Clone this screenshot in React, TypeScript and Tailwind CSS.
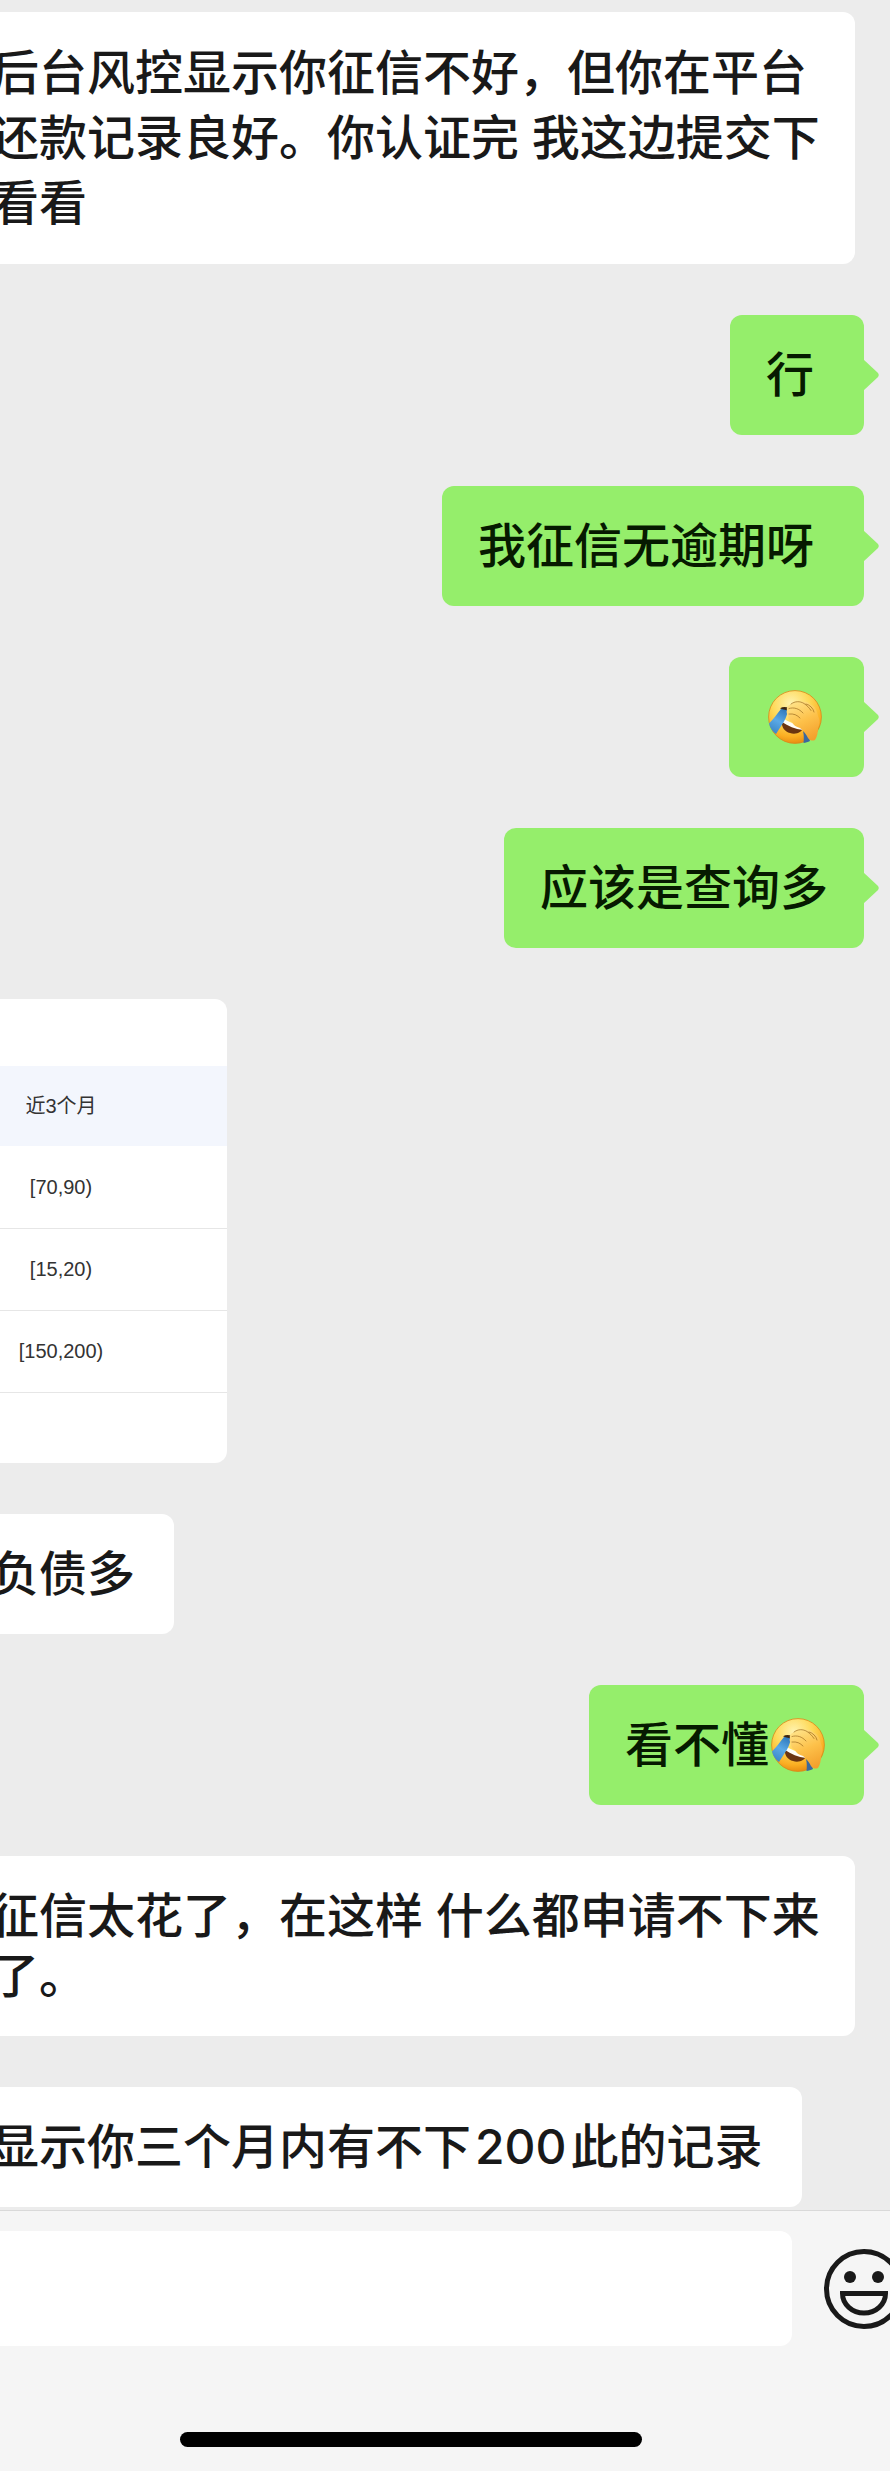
import type { ReactNode } from "react";
import clsx from "clsx";

const FONT =
  "font-[Inter,'Noto_Sans_CJK_SC',sans-serif] text-5xl font-medium";

type Message = {
  from: "me" | "them";
  lines?: string[];
  content?: ReactNode;
  className?: string;
};

function FacepalmEmoji() {
  return (
    <svg
      viewBox="0 0 54 54"
      role="img"
      aria-label="捂脸"
      className="size-[54px] shrink-0"
    >
      <defs>
        <radialGradient id="face" cx="0.42" cy="0.25" r="0.78">
          <stop offset="0" stopColor="#fff3b0" />
          <stop offset="0.45" stopColor="#fed958" />
          <stop offset="0.8" stopColor="#fbae22" />
          <stop offset="1" stopColor="#e5860f" />
        </radialGradient>
        <linearGradient id="hand" x1="0.3" y1="0" x2="0.7" y2="1">
          <stop offset="0" stopColor="#ffe287" />
          <stop offset="0.5" stopColor="#fdc14a" />
          <stop offset="1" stopColor="#f3a02c" />
        </linearGradient>
        <linearGradient id="tear" x1="0.7" y1="0" x2="0.3" y2="1">
          <stop offset="0" stopColor="#2f78bb" />
          <stop offset="0.5" stopColor="#5aa9e6" />
          <stop offset="1" stopColor="#3b86c6" />
        </linearGradient>
      </defs>
      <circle cx="27" cy="27" r="26.4" fill="url(#face)" stroke="#d8881c" strokeWidth="0.8" />
      {/* mouth */}
      <path d="M14 31c6 3 14 6 21 7-1 4-7 7-13 5-5-1-9-6-8-12z" fill="#6b3410" />
      <path d="M15 28.5c6 3.5 13 6.5 21 8.5l-1 3c-8-1-15-4-21-8z" fill="#fffdf6" />
      {/* tears */}
      <path
        d="M13 19c2.5-1.3 5-1 7 0-.5 5-2 9-4 12.5L8 44C4.5 41.5 2 38 1 33.5 5 29.5 9 24 13 19z"
        fill="url(#tear)"
      />
      <path d="M35 41l5 4 2 6c-2 1-4.5 1.7-6.5 2 .5-4 .5-8-.5-12z" fill="#3c699e" />
      <path d="M12 18.2c2.5-1.5 5.5-1.5 8-.7l-1.500 2.700c-2-.7-4-.9-6.500-2z" fill="#3b2410" />
      {/* hand */}
      <path
        d="M19 20c-1-3 2-5 4-6 3-3 7-4 11-2 3-1 7 0 9 3 4 1 6 6 7 11 2 4 2 8 0 12 0 5-1 9-3 12-2 1-5 1-7-2-2-4-4-7-8-10-4-1-7-3-8-6-3-1-4-3-4-6-1-2-2-4-1-6z"
        fill="url(#hand)"
      />
      <path
        d="M23 14c4-3 9-3 13-.5 3 2 5 4 7 7M21 18.500c5-1.500 10 0 14 4.500M21 24c5-.5 8 1 11 4M38 14c4 1 7 4 8 8"
        fill="none"
        stroke="#8d5a12"
        strokeWidth="0.6"
        strokeLinecap="round"
      />
    </svg>
  );
}

function SmileIcon() {
  return (
    <svg
      viewBox="0 0 80 80"
      fill="none"
      stroke="#191919"
      strokeWidth="5"
      className="size-20 shrink-0"
    >
      <circle cx="40" cy="40" r="37.5" />
      <circle cx="26" cy="28" r="6" fill="#191919" stroke="none" />
      <circle cx="54" cy="28" r="6" fill="#191919" stroke="none" />
      <path d="M18.5 44.5h43a21.5 19.5 0 0 1-43 0z" />
    </svg>
  );
}

function BubbleTail() {
  return (
    <svg
      viewBox="0 0 16 32"
      aria-hidden="true"
      className="absolute top-11 left-full h-8 w-4 -ml-px"
    >
      <path d="M0 0l14.5 13.5q2.5 2.5 0 5L0 32z" fill="#95ee6b" />
    </svg>
  );
}

function Bubble({ from, lines, content, className }: Message) {
  const mine = from === "me";

  return (
    <div
      className={clsx(
        FONT,
        "relative leading-[60px] whitespace-nowrap",
        mine
          ? "mr-[26px] self-end rounded-xl bg-[#95ee6b] py-[30px] text-[#061a00]"
          : "self-start rounded-r-xl bg-white pr-[39px] text-[#191919]",
        className
      )}
    >
      {content}
      {lines?.map((line) => (
        <p key={line} className={mine ? "" : "-ml-[9px]"}>
          {line}
        </p>
      ))}
      {mine && <BubbleTail />}
    </div>
  );
}

const ROWS = ["[70,90)", "[15,20)", "[150,200)"];

function QueryTable() {
  return (
    <div className="w-[227px] self-start overflow-hidden rounded-r-xl bg-white pt-[67px] pb-[70px]">
      <table className="w-full border-collapse text-center font-['Liberation_Sans','Noto_Sans_CJK_SC',sans-serif] text-[20px] text-[#333]">
        <thead>
          <tr className="h-20 bg-[#f3f6fd]">
            <th className="pr-[105px] font-normal">近3个月</th>
          </tr>
        </thead>
        <tbody>
          {ROWS.map((row) => (
            <tr key={row} className="h-[82px] border-b border-[#e6e6e6]">
              <td className="pr-[105px]">{row}</td>
            </tr>
          ))}
        </tbody>
      </table>
    </div>
  );
}

export default function App() {
  return (
    <div className="flex min-h-screen flex-col overflow-x-hidden bg-[#ececec]">
      <main className="flex flex-1 flex-col gap-[51px] pt-3 pb-[2px]">
        <Bubble
          from="them"
          lines={[
            "后台风控显示你征信不好，但你在平台",
            "还款记录良好。你认证完 我这边提交下",
            "看看",
          ]}
          className="mr-[35px] self-stretch pt-7 pb-[29px] leading-[65px]"
        />
        <Bubble from="me" lines={["行"]} className="pr-[50px] pl-9" />
        <Bubble from="me" lines={["我征信无逾期呀"]} className="pr-[50px] pl-9" />
        <Bubble
          from="me"
          content={
            <span className="flex h-[60px] items-center">
              <FacepalmEmoji />
            </span>
          }
          className="pr-[42px] pl-[39px]"
        />
        <Bubble from="me" lines={["应该是查询多"]} className="px-9" />
        <QueryTable />
        <Bubble from="them" lines={["负债多"]} className="py-[30px]" />
        <Bubble
          from="me"
          content={
            <span className="flex h-[60px] items-center gap-[2px]">
              看不懂
              <FacepalmEmoji />
            </span>
          }
          className="pr-[39px] pl-9"
        />
        <Bubble
          from="them"
          lines={["征信太花了，在这样 什么都申请不下来", "了。"]}
          className="mr-[35px] self-stretch py-[30px]"
        />
        <Bubble
          from="them"
          content={
            <p className="-ml-[9px]">
              显示你三个月内有不下
              <span className="mx-1">200</span>
              此的记录
            </p>
          }
          className="py-[30px]"
        />
      </main>

      <footer className="border-t border-[#d9d9d9] bg-[#f5f5f5] pt-5 pb-6">
        <div className="flex items-center gap-8">
          <input
            type="text"
            aria-label="输入消息"
            className="h-[115px] min-w-0 flex-1 rounded-r-xl bg-white px-6 text-5xl outline-none"
          />
          <button
            type="button"
            aria-label="表情"
            className="flex w-[66px] overflow-hidden"
          >
            <SmileIcon />
          </button>
        </div>
        <div className="mt-[86px] mr-[248px] ml-[180px] h-[15px] rounded-full bg-black" />
      </footer>
    </div>
  );
}
